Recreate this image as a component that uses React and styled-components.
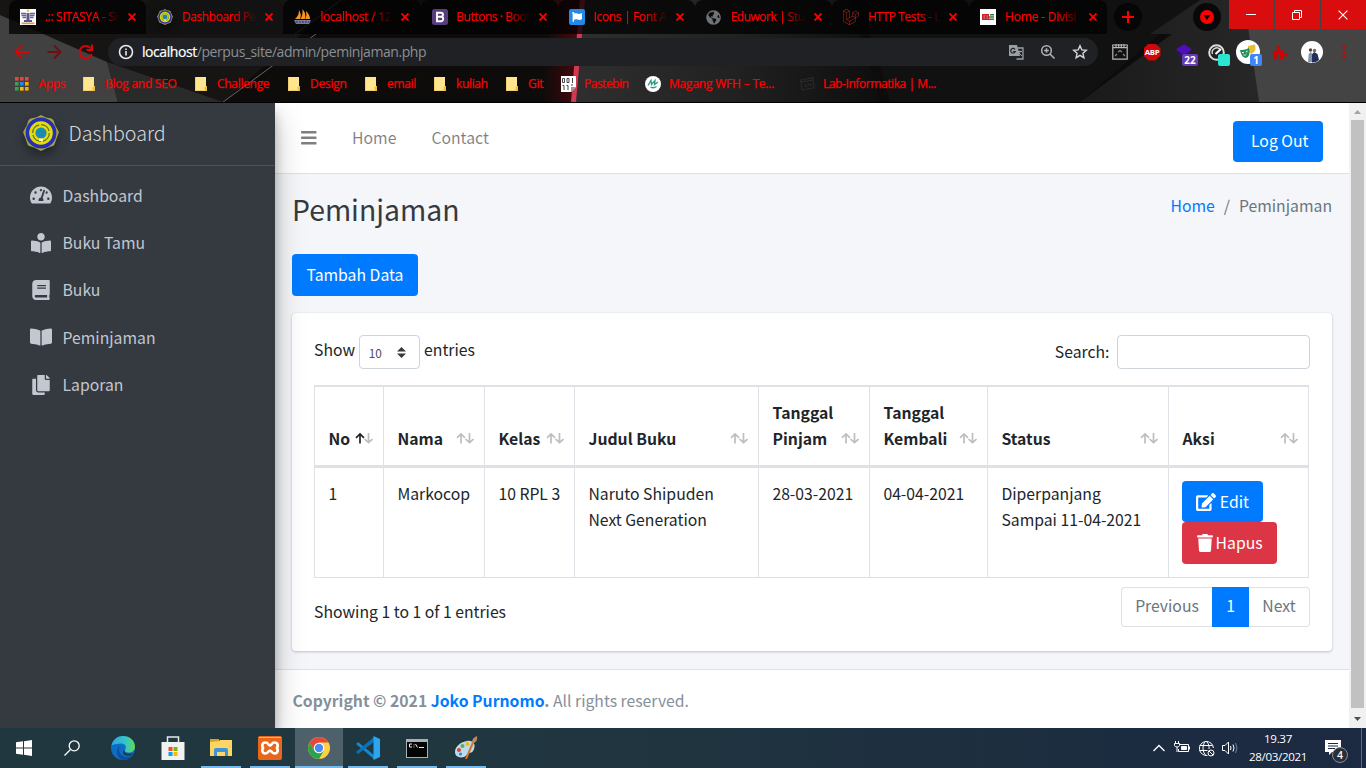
import React from "react";
import styled, { createGlobalStyle } from "styled-components";
import {
  FaTachometerAlt, FaBookReader, FaBook, FaBookOpen, FaCopy, FaBars, FaEdit, FaTrash,
  FaFlag, FaLaravel, FaGlobeAmericas, FaPuzzlePiece,
} from "react-icons/fa";

const sans = `"Noto Sans CJK SC", "Noto Sans CJK JP", sans-serif`;
const ui = `"Open Sans", "Noto Sans", sans-serif`;

const Global = createGlobalStyle`
  * { box-sizing: border-box; }
  body { margin: 0; overflow: hidden; background: #000; }
  svg { display: block; flex: none; }
`;

const Screen = styled.div`
  width: 1366px;
  height: 768px;
  display: flex;
  flex-direction: column;
  overflow: hidden;
  font-family: ${sans};
`;

/* ---------- browser frame ---------- */

const Browser = styled.header`
  position: relative;
  height: 103px;
  background: #0c0b0b;
  border-bottom: 1px solid #000;
  font-family: ${ui};
  color: #f00;
`;
const ThemeArt = styled.svg`
  position: absolute;
  inset: 0;
`;
const BrowserRows = styled.div`
  position: relative;
  display: flex;
  flex-direction: column;
`;
const TabStrip = styled.div`
  display: flex;
  height: 34px;
  padding-left: 9px;
`;
const Tab = styled.div`
  width: 137.2px;
  height: 34px;
  flex: none;
  display: flex;
  align-items: center;
  padding: 0 10px 0 11px;
  border-radius: 8px 8px 0 0;
  background: ${(p) => (p.$active ? "rgba(18,17,17,.75)" : "rgba(2,2,2,.78)")};
`;
const TabLine = styled.span`
  width: 1px;
  height: 20px;
  margin: 0 -10px 0 12px;
  background: #b00808;
`;
const TabTitle = styled.span`
  width: 75px;
  margin: 0 9px 0 9px;
  white-space: nowrap;
  font-size: 12px;
  line-height: 18px;
  letter-spacing: ${(p) => p.$ls}px;
  -webkit-text-stroke: 0.25px;
  mask-image: linear-gradient(to right, #000 70%, rgba(0, 0, 0, .1) 98%);
`;
const RoundButton = styled.div`
  width: 28px;
  height: 28px;
  margin: 3px 0 0 ${(p) => p.$left}px;
  border-radius: 50%;
  background: rgba(5, 5, 5, .9);
  display: flex;
  align-items: center;
  justify-content: center;
`;
const WindowButtons = styled.div`
  display: flex;
  gap: 1px;
  height: 29px;
  margin-left: auto;
`;
const WindowButton = styled.div`
  width: 45px;
  background: #d90c0e;
  display: flex;
  align-items: center;
  justify-content: center;
  padding-right: 1px;
`;

const Toolbar = styled.div`
  display: flex;
  align-items: center;
  height: 36px;
  padding-left: 13px;
`;
const NavIcons = styled.div`
  display: flex;
  gap: 14px;
  width: 95px;
`;
const AddressBar = styled.div`
  width: 990px;
  height: 28px;
  border-radius: 14px;
  background: #202124;
  display: flex;
  align-items: center;
  padding: 0 10px;
  font-size: 14px;
  color: #9aa0a6;
`;
const Url = styled.span`
  flex: 1;
  margin-left: 8px;
  letter-spacing: -0.43px;
  line-height: 20px;
  color: #8b8f94;
  b { color: #fff; font-weight: 400; -webkit-text-stroke: 0.2px; }
`;
const AddressIcons = styled.div`
  display: flex;
  gap: 16px;
`;
const Extensions = styled.div`
  display: flex;
  align-items: center;
  margin-left: 7px;
`;
const Ext = styled.div`
  position: relative;
  width: 32px;
  height: 28px;
  display: flex;
  align-items: center;
  justify-content: center;
  left: -1px;
`;
const ExtBadge = styled.span`
  position: absolute;
  left: ${(p) => p.$x}px;
  top: 16px;
  width: ${(p) => p.$w}px;
  height: 12px;
  border-radius: 2px;
  background: ${(p) => p.$color};
  color: #fff;
  font: 700 10px/12px ${ui};
  text-align: center;
`;
const Abp = styled.div`
  width: 17px;
  height: 17px;
  clip-path: polygon(30% 0, 70% 0, 100% 30%, 100% 70%, 70% 100%, 30% 100%, 0 70%, 0 30%);
  background: #d0080c;
  color: #fff;
  font: 700 7.8px/17px ${ui};
  letter-spacing: -0.3px;
  text-align: center;
`;

const Bookmarks = styled.div`
  display: flex;
  height: 28px;
  padding-left: 15px;
`;
const Bookmark = styled.div`
  width: ${(p) => p.$w}px;
  flex: none;
  display: flex;
  align-items: center;
  gap: ${(p) => p.$gap}px;
  font-size: 12px;
  line-height: 18px;
  letter-spacing: ${(p) => p.$ls}px;
  -webkit-text-stroke: 0.25px;
  white-space: nowrap;
`;

/* ---------- page ---------- */

const Page = styled.div`
  height: 625px;
  display: flex;
  background: #f4f6f9;
`;
const Sidebar = styled.aside`
  position: relative;
  z-index: 1;
  width: 275px;
  flex: none;
  background: #343a40;
  box-shadow: 0 14px 28px rgba(0, 0, 0, .25), 0 10px 10px rgba(0, 0, 0, .22);
  clip-path: inset(0 -40px 0 0);
`;
const Brand = styled.div`
  height: 63px;
  display: flex;
  align-items: center;
  gap: 9.5px;
  padding: 0 0 3px 23px;
  border-bottom: 1px solid #4b545c;
  font-size: 19.7px;
  font-weight: 300;
  line-height: 30px;
  color: rgba(255, 255, 255, .82);
`;
const Crest = styled.svg`
  border-radius: 50%;
  filter: drop-shadow(0 5px 5px rgba(0, 0, 0, .35));
`;
const Menu = styled.nav`
  padding-top: 6px;
`;
const MenuItem = styled.div`
  height: 47.4px;
  display: flex;
  align-items: center;
  padding-left: 28px;
  font-size: 15.75px;
  line-height: 26px;
  color: #c2c7d0;
`;
const MenuIcon = styled.span`
  width: 26px;
  margin-right: 8.5px;
  padding-bottom: 1px;
  display: flex;
  justify-content: center;
`;

const Main = styled.main`
  width: 1074px;
  flex: none;
  display: flex;
  flex-direction: column;
  font-size: 15.75px;
  line-height: 26.4px;
  color: #212529;
`;
const TopNav = styled.div`
  height: 71px;
  flex: none;
  display: flex;
  align-items: center;
  padding: 0 26px 0 25px;
  background: #fff;
  border-bottom: 1px solid #dee2e6;
  color: rgba(0, 0, 0, .5);
`;
const Burger = styled(FaBars)`
  margin-bottom: 1px;
`;
const NavLink = styled.span`
  margin-left: ${(p) => p.$left}px;
  padding-top: 1px;
`;
const Button = styled.button`
  display: inline-flex;
  align-items: center;
  height: ${(p) => p.$h || 41.5}px;
  width: ${(p) => p.$w}px;
  padding: 0 0 0 ${(p) => p.$pl || 14}px;
  gap: ${(p) => p.$gap || 3}px;
  border: 0;
  border-radius: 4px;
  background: ${(p) => (p.$danger ? "#dc3545" : "#007bff")};
  color: #fff;
  font: 400 15.75px/26px ${sans};
  white-space: nowrap;
`;
const LogOut = styled(Button)`
  margin: 7px 0 0 auto;
  padding-bottom: 1px;
`;
const ContentHeader = styled.div`
  display: flex;
  justify-content: space-between;
  height: 80px;
  flex: none;
  padding: 16px 17px 0 17px;
`;
const Title = styled.h1`
  margin: 0;
  font-size: 28.35px;
  font-weight: 400;
  line-height: 38px;
  color: #343a40;
`;
const Breadcrumb = styled.div`
  display: flex;
  gap: 9px;
  padding-top: 3px;
  color: #6c757d;
  a { color: #007bff; }
`;
const Actions = styled.div`
  padding: 0 17px;
  height: 59px;
  flex: none;
  display: flex;
  align-items: flex-start;
`;
const Card = styled.section`
  height: 338px;
  flex: none;
  margin: 0 17px 0 17px;
  padding: 22px;
  border-radius: 4px;
  background: #fff;
  box-shadow: 0 0 1px rgba(0, 0, 0, .13), 0 1px 3px rgba(0, 0, 0, .2);
`;
const TableTools = styled.div`
  display: flex;
  justify-content: space-between;
  height: 50px;
`;
const LengthPicker = styled.label`
  display: flex;
  gap: 4px;
  line-height: 30px;
`;
const Select = styled.div`
  width: 61px;
  height: 34px;
  border: 1px solid #ced4da;
  border-radius: 4px;
  display: flex;
  align-items: center;
  justify-content: space-between;
  padding: 1px 13px 0 8.6px;
  font-size: 11.8px;
  line-height: 16px;
  color: #495057;
`;
const SearchBox = styled.label`
  display: flex;
  gap: 7.5px;
  line-height: 34px;
`;
const SearchInput = styled.input`
  width: 193px;
  height: 34px;
  margin: 0;
  border: 1px solid #ced4da;
  border-radius: 4px;
  background: #fff;
`;
const Table = styled.table`
  width: 995px;
  table-layout: fixed;
  border-spacing: 0;
  border-right: 1px solid #dee2e6;
`;
const Th = styled.th`
  height: 83px;
  padding: 0 10px 13px 13.5px;
  vertical-align: bottom;
  text-align: left;
  font-weight: 700;
  line-height: 26px;
  border: solid #dee2e6;
  border-width: 2px 0 3px 1px;
`;
const ThInner = styled.div`
  display: flex;
  align-items: flex-end;
  justify-content: space-between;
`;
const Td = styled.td`
  height: 110px;
  padding: 13px 0 0 13.4px;
  vertical-align: top;
  white-space: nowrap;
  border: solid #dee2e6;
  border-width: 0 0 1px 1px;
`;
const ButtonStack = styled.div`
  display: flex;
  flex-direction: column;
  align-items: flex-start;
`;
const TableFooter = styled.div`
  display: flex;
  justify-content: space-between;
  padding-top: 9px;
`;
const Info = styled.div`
  padding-top: 12px;
`;
const Pagination = styled.div`
  display: flex;
  height: 40px;
`;
const PageLink = styled.div`
  width: ${(p) => p.$w}px;
  border: 1px solid ${(p) => (p.$active ? "#007bff" : "#dee2e6")};
  border-left-width: ${(p) => (p.$last ? 0 : 1)}px;
  border-right-width: ${(p) => (p.$first ? 0 : 1)}px;
  border-radius: ${(p) => (p.$first ? "4px 0 0 4px" : p.$last ? "0 4px 4px 0" : "0")};
  background: ${(p) => (p.$active ? "#007bff" : "#fff")};
  color: ${(p) => (p.$active ? "#fff" : "#6c757d")};
  line-height: 36px;
  text-align: center;
`;
const Footer = styled.footer`
  flex: 1;
  margin-top: 18px;
  padding: 18px 0 0 17.5px;
  background: #fff;
  border-top: 1px solid #dee2e6;
  color: #869099;
  a { color: #007bff; }
`;
const Scrollbar = styled.div`
  width: 17px;
  display: flex;
  flex-direction: column;
  align-items: center;
  padding-top: 7px;
  background: #f1f1f1;
`;
const Thumb = styled.div`
  width: 13px;
  height: 588px;
  margin: 6px 0 9px;
  background: #c1c1c1;
`;

/* ---------- taskbar ---------- */

const Taskbar = styled.div`
  height: 40px;
  display: flex;
  background: linear-gradient(to right, #213740 0%, #213740 35%, #1e303f 65%, #1b2942 100%);
  color: #fff;
  font-family: ${ui};
`;
const Task = styled.div`
  width: ${(p) => p.$w || 49}px;
  flex: none;
  display: flex;
  align-items: center;
  justify-content: center;
  background:
    linear-gradient(#76b9ed, #76b9ed) center bottom / ${(p) => (p.$active ? 48 : p.$open ? 40 : 0)}px 2px no-repeat,
    linear-gradient(${(p) => (p.$active ? "#4e616a, #4e616a" : "transparent, transparent")}) center / 48px 40px no-repeat;
`;
const Tray = styled.div`
  display: flex;
  align-items: center;
  margin-left: auto;
`;
const TrayIcons = styled.div`
  display: flex;
  align-items: center;
  gap: 7px;
  svg:first-child { margin-right: 2px; }
`;
const Clock = styled.div`
  width: 64px;
  margin: 0 14px 0 7px;
  font-size: 11.6px;
  line-height: 18px;
  letter-spacing: -0.35px;
  text-align: center;
`;
const Notice = styled.div`
  position: relative;
  width: 38px;
  height: 40px;
  padding: 12px 0 0 1px;
  border-right: 1px solid #5b6878;
  margin-right: 4px;
`;
const NoticeCount = styled.span`
  position: absolute;
  left: 8px;
  top: 19px;
  width: 16px;
  height: 16px;
  border: 1px solid #87909c;
  border-radius: 50%;
  background: #2c2f35;
  font-size: 10.5px;
  font-weight: 600;
  line-height: 14px;
  text-align: center;
`;

/* ---------- icons ---------- */

const Cross = ({ size = 8, color = "#f00", w = 1.9 }) => (
  <svg width={size} height={size} viewBox="0 0 8 8" stroke={color} strokeWidth={w}><path d="M.5 .5l7 7M7.5 .5l-7 7" /></svg>
);
const Folder = () => (
  <svg width="12" height="14" viewBox="0 0 12 14"><path d="M0 0h11v9h1v5H0z" fill="#ffe590" /><path d="M.5 0v13.500H9" fill="none" stroke="#eec95f" strokeWidth=".8" /><path d="M9.500 14V10.500L11 9h1v5z" fill="#eebf3c" /></svg>
);
const CrestMark = ({ size }) => (
  <Crest width={size} height={size} viewBox="0 0 36 36">
    <path d="M18 0l5 2.6 7 1.2 2.3 6.6L36 17l-2.4 6.5-2.5 7L24 33l-6 3-6-3-7-2.500-2.500-7L0 17l3.700-6.600L6 3.800l7-1.200z" fill="#a6a340" />
    <circle cx="18" cy="18" r="15.4" fill="#2630b4" />
    <circle cx="18" cy="18" r="11.8" fill="#e5dc0c" />
    <circle cx="18" cy="18" r="8.3" fill="none" stroke="#5c7429" strokeWidth="1.3" strokeDasharray="11 2" />
    <circle cx="18" cy="18" r="5.6" fill="#188fb4" />
    <path d="M14 17.500q4-2 8 0M15 20h6" fill="none" stroke="#4267a0" strokeWidth=".7" />
    <path d="M16 23.500h4v2.500h-4z" fill="#fff6a0" />
  </Crest>
);
const favicons = {
  sitasya: (
    <svg width="16" height="16" viewBox="0 0 16 16"><path d="M0 0h16v16H0z" fill="#fff" /><path d="M1 4.500h5M1.500 6.500H6M2.500 8.500H6M10 4.500h5M10 6.500h4.500M10 8.500h3.500" stroke="#67629b" strokeWidth="1.400" /><path d="M6.500 4h3v7h-3zM4 11h8v2H4z" fill="#5c568e" /><circle cx="8" cy="1.800" r="1.300" fill="#f0bd36" /><path d="M1.500 13.500h13v1.700h-13z" fill="#d69a54" /></svg>
  ),
  crest: <CrestMark size={16} />,
  pma: (
    <svg width="17" height="16" viewBox="0 0 17 16"><path d="M1 10Q5 7 5 1q3 5 1 9zM6.500 10Q9 6 8.500 0q4 5 2.500 10zM11.500 10Q13 6 12 2q4 4 4 8z" fill="#f7981d" /><path d="M0 11h17l-2 4H2z" fill="#777b9f" /><path d="M2 13h13" stroke="#292e55" strokeDasharray="2 1" /></svg>
  ),
  boot: (
    <svg width="16" height="16" viewBox="0 0 16 16"><rect width="16" height="16" rx="2.500" fill="#563d7c" /><path d="M5 3.800h4a2 2 0 010 4 2.200 2.200 0 010 4.400H5zM5 7.800h4" fill="none" stroke="#fff" strokeWidth="1.900" /></svg>
  ),
};
const Square = styled.span`
  width: 16px;
  height: 16px;
  flex: none;
  border-radius: ${(p) => p.$r || 0}px;
  background: ${(p) => p.$bg};
  color: ${(p) => p.$color};
  display: flex;
  align-items: center;
  justify-content: center;
`;

const tabs = [
  { title: ".:: SITASYA - Si", ls: -0.3, icon: favicons.sitasya },
  { title: "Dashboard Pe", ls: -0.42, icon: favicons.crest, active: true },
  { title: "localhost / 12", ls: -0.25, icon: favicons.pma, line: true },
  { title: "Buttons · Boot", ls: -0.45, icon: favicons.boot, line: true },
  { title: "Icons | Font A", ls: -0.35, icon: <Square $bg="#228ae6" $r={2} $color="#fff"><FaFlag size={10} /></Square>, line: true },
  { title: "Eduwork | Stu", ls: -0.5, icon: <Square $bg="transparent" $color="#6f7378"><FaGlobeAmericas size={15} /></Square>, line: true },
  { title: "HTTP Tests - L", ls: -0.4, icon: <Square $bg="transparent" $color="#b5251e"><FaLaravel size={16} /></Square>, line: true },
  { title: "Home - Divisi", ls: -0.2, icon: <Square $bg="#fff" $color="#c4262a"><svg width="12" height="6" viewBox="0 0 12 6"><path d="M0 0h7v6H0z" fill="#c4262a" /><path d="M1.500 2h1.500M1.500 4h1.500M4.500 2h1.500M4.500 4h1.500" stroke="#fff" strokeWidth=".5" /><path d="M12 .7H8M12 3H7M12 5.300H7" stroke="#39764e" strokeWidth="1.400" /></svg></Square> },
];

const AppsGrid = () => (
  <svg width="14" height="14" viewBox="0 0 14 14">
    {["#e8453c", "#e8453c", "#e8453c", "#34a353", "#1f87fc", "#f9ab00", "#34a353", "#f9bb06", "#f9ab00"].map((c, i) => (
      <rect key={i} x={(i % 3) * 5} y={Math.floor(i / 3) * 5} width="3.600" height="3.600" fill={c} />
    ))}
  </svg>
);
const Binary = () => (
  <svg width="15" height="16" viewBox="0 0 15 16"><path d="M0 0h15v11l-5 5H0z" fill="#fff" /><path d="M1.500 2.500h2v4h-2zM6 2.500h2v4H6zM11.500 2v5M1.500 9.500h1.500V14M5.500 9.500H7V14M10 9h2" fill="none" stroke="#333" strokeWidth=".9" /><path d="M10 16v-5h5z" fill="#8f98a0" /></svg>
);
const Magang = () => (
  <svg width="16" height="16" viewBox="0 0 16 16"><circle cx="8" cy="8" r="8" fill="#fff" /><path d="M3 9.500L6 4.500l.5 4L10 4.500 9.500 8.500 13 6M5.500 11q3 1.700 6-.5" fill="none" stroke="#2c9a7f" strokeWidth="1.300" /></svg>
);
const CodeWindow = () => (
  <svg width="15" height="14" viewBox="0 0 15 14" fill="none" stroke="#2a2828" strokeWidth="1.200"><path d="M.7 3L13 .8l1.200 10L2 13zM1 5.200l12.500-2M6 7L4.500 8.700 6.500 10M9.500 6.200l2 1.300-1.500 1.700M8.500 6.500l-.8 3.300" /></svg>
);

const bookmarks = [
  { w: 68, gap: 9.5, ls: -0.3, icon: <AppsGrid />, label: "Apps" },
  { w: 112, gap: 10, ls: -0.25, icon: <Folder />, label: "Blog and SEO" },
  { w: 93, gap: 10, ls: -0.3, icon: <Folder />, label: "Challenge" },
  { w: 77, gap: 10, ls: -0.25, icon: <Folder />, label: "Design" },
  { w: 69, gap: 10, ls: -0.35, icon: <Folder />, label: "email" },
  { w: 72, gap: 10, ls: -0.35, icon: <Folder />, label: "kuliah" },
  { w: 55, gap: 10, ls: -0.3, icon: <Folder />, label: "Git" },
  { w: 84, gap: 8, ls: -0.5, icon: <Binary />, label: "Pastebin" },
  { w: 155, gap: 8, ls: -0.2, icon: <Magang />, label: "Magang WFH – Te..." },
  { w: 140, gap: 8, ls: -0.42, icon: <CodeWindow />, label: "Lab-Informatika | M..." },
];

const SortArrows = ({ asc }) => (
  <svg width="18" height="26" viewBox="0 0 18 26" fill="none" strokeWidth="1.700">
    <path d="M13.500 7v10M9.500 13l4 3.700 4-3.700" stroke="#bdbebf" />
    <path d="M5 17.500V8M1 11.800L5 8 9 11.800" stroke={asc ? "#212529" : "#bdbebf"} />
  </svg>
);
const columns = [
  ["No", 69], ["Nama", 101], ["Kelas", 90], ["Judul Buku", 184],
  ["Tanggal Pinjam", 111], ["Tanggal Kembali", 118], ["Status", 181], ["Aksi", 140],
];
const menu = [
  ["Dashboard", FaTachometerAlt, 22], ["Buku Tamu", FaBookReader, 20], ["Buku", FaBook, 20],
  ["Peminjaman", FaBookOpen, 22], ["Laporan", FaCopy, 20],
];

const Theme = () => (
  <ThemeArt width="1366" height="102" viewBox="0 0 1366 102">
    <defs>
      <linearGradient id="mid" x1="0" x2="1"><stop offset="0" stopColor="#302f2f" /><stop offset=".5" stopColor="#222" /><stop offset="1" stopColor="#0e0e0e" /></linearGradient>
      <linearGradient id="glow" x1="0" x2="1"><stop offset="0" stopColor="#700008" stopOpacity="0" /><stop offset="1" stopColor="#8a0510" stopOpacity=".6" /></linearGradient>
      <linearGradient id="right" x1="0" x2="1"><stop offset="0" stopColor="#1a1a1a" /><stop offset="1" stopColor="#272727" /></linearGradient>
    </defs>
    <rect width="1366" height="102" fill="#0d0c0b" />
    <path d="M0 0H341L223 102H0z" fill="#161514" />
    <path d="M0 15L107 62 118 102H0z" fill="#414141" />
    <path d="M107 62L223 102H118z" fill="#2a2a2a" />
    <path d="M341 0L295 34M316 34L223 102" stroke="#707070" strokeWidth=".9" />
    <path d="M583 0H850L880 102H573z" fill="url(#mid)" />
    <path d="M553 0H583L573 102H543z" fill="url(#glow)" />
    <path d="M580 0h5L576 102h-5z" fill="#d03a50" />
    <path d="M860 0H1200L1080 102H890z" fill="#121111" />
    <path d="M1200 0H1245L1259 102H1080L1172 34H1150z" fill="url(#right)" />
    <path d="M1244 0H1366V102H1259z" fill="#444" />
  </ThemeArt>
);

export default function App() {
  return (
    <Screen>
      <Global />
      <Browser>
        <Theme />
        <BrowserRows>
          <TabStrip>
            {tabs.map((t) => (
              <Tab key={t.title} $active={t.active}>
                {t.icon}
                <TabTitle $ls={t.ls}>{t.title}</TabTitle>
                <Cross />
                {t.line && <TabLine />}
              </Tab>
            ))}
            <RoundButton $left={7.5}><svg width="12" height="12" viewBox="0 0 12 12" stroke="#f00" strokeWidth="2"><path d="M6 0v12M0 6h12" /></svg></RoundButton>
            <RoundButton $left={50.5}><svg width="14" height="14" viewBox="0 0 14 14"><circle cx="7" cy="7" r="7" fill="#f00" /><path d="M3.500 5h7L7 10z" fill="#160404" /></svg></RoundButton>
            <WindowButtons>
              <WindowButton><svg width="10" height="2" viewBox="0 0 10 2"><path d="M0 .5h10" stroke="#fff" /></svg></WindowButton>
              <WindowButton><svg width="10" height="10" viewBox="0 0 10 10" fill="none" stroke="#fff"><path d="M.5 2.500h7v7h-7zM2.500 2.500v-2h7v7h-2" /></svg></WindowButton>
              <WindowButton><Cross size={10} color="#fff" w={0.9} /></WindowButton>
            </WindowButtons>
          </TabStrip>
          <Toolbar>
            <NavIcons>
              <svg width="18" height="16" viewBox="0 0 18 16" fill="none" stroke="#d80505" strokeWidth="2"><path d="M16.500 8H3M9 1.500L2.500 8 9 14.500" /></svg>
              <svg width="18" height="16" viewBox="0 0 18 16" fill="none" stroke="#6c1010" strokeWidth="2"><path d="M2.500 8H15M9 1.500L15.500 8 9 14.500" /></svg>
              <svg width="18" height="16" viewBox="0 0 18 16" fill="none" stroke="#d80505" strokeWidth="2"><path d="M13.800 4.500A6.200 6.200 0 1014.700 10M15 .5V6H9.500" /></svg>
            </NavIcons>
            <AddressBar>
              <svg width="16" height="16" viewBox="0 0 16 16" fill="none" stroke="#e8eaed" strokeWidth="1.600"><circle cx="8" cy="8" r="6.500" /><path d="M8 7v4.500M8 4.400V6" /></svg>
              <Url><b>localhost</b>/perpus_site/admin/peminjaman.php</Url>
              <AddressIcons>
                <svg width="16" height="16" viewBox="0 0 16 16"><path d="M1 1h8l3 11H1z" fill="#9a9fa5" /><path d="M7 4h8v11H8.500" fill="none" stroke="#9a9fa5" strokeWidth="1.300" /><path d="M7 5.500A2.300 2.300 0 107.200 7.500H5.300" fill="none" stroke="#202124" strokeWidth="1.200" /><path d="M10 7.500h4M12 6.500v1.200q0 2-2 3.300M11 9l3 3" stroke="#9a9fa5" fill="none" /></svg>
                <svg width="16" height="16" viewBox="0 0 16 16" fill="none" stroke="#b0b3b8" strokeWidth="1.500"><circle cx="6.500" cy="6.500" r="4.800" /><path d="M10 10l4.500 4.500M6.500 4.200v4.600M4.200 6.500h4.600" /></svg>
                <svg width="16" height="16" viewBox="0 0 16 16" fill="none" stroke="#d5d7da" strokeWidth="1.400"><path d="M8 1.800l1.800 4.100 4.500.4-3.400 3 1 4.400L8 11.400l-3.900 2.300 1-4.400-3.400-3 4.500-.4z" /></svg>
              </AddressIcons>
            </AddressBar>
            <Extensions>
              <Ext>
                <svg width="16" height="16" viewBox="0 0 16 16" fill="none" stroke="#b8b8b8" strokeWidth="1.200"><path d="M.8 1h14.400v14.200H.8zM1 3.700h14M4 0v3M6.700 0v3M9.300 0v3M12 0v3" /><path d="M3 12l2-2M6 8l2-1.500L10 8M11 10l2 2" stroke="#858585" /></svg>
              </Ext>
              <Ext><Abp>ABP</Abp></Ext>
              <Ext>
                <svg width="16" height="18" viewBox="0 0 16 18"><path d="M8 1l8 5.500-8 6-8-6z" fill="#4d0fb8" /><path d="M1 9.500l7 4 6-4v2l-6 4-7-4z" fill="#32107a" /></svg>
                <ExtBadge $x={14} $w={16} $color="#673ab7">22</ExtBadge>
              </Ext>
              <Ext>
                <svg width="17" height="17" viewBox="0 0 17 17"><circle cx="8.500" cy="8.500" r="7.300" fill="#202020" stroke="#ddd" strokeWidth="2" /><path d="M4.500 10a4.500 4.500 0 018-4" fill="none" stroke="#ddd" strokeWidth="1.300" /><path d="M7.500 10L13 5" stroke="#fff" strokeWidth="2" /></svg>
                <ExtBadge $x={18} $w={12} $color="#2be5d3" />
              </Ext>
              <Ext>
                <svg width="24" height="24" viewBox="0 0 24 24"><circle cx="12" cy="12" r="12" fill="#fff" /><path d="M12 6l7-1.500q2 7-3.500 9.500-4-2-3.500-8z" fill="#e5bd37" /><path d="M4 10q5 .5 9-2 2 8-3 10-5-1-6-8z" fill="#23915a" /><path d="M6 12.500l2 .3M10 12l1.600-1M7.500 15q2 .7 3-1" stroke="#fff" /></svg>
                <ExtBadge $x={18} $w={12} $color="#4285f4">1</ExtBadge>
              </Ext>
              <Ext><FaPuzzlePiece size={15} color="#cc0404" /></Ext>
              <Ext>
                <svg width="22" height="22" viewBox="0 0 22 22"><circle cx="11" cy="11" r="11" fill="#fff" /><circle cx="9.500" cy="9" r="1.700" fill="#55443e" /><circle cx="13.500" cy="9.500" r="1.700" fill="#826458" /><path d="M7 21l.7-8 2-2 2 2v8z" fill="#8395a9" /><path d="M11 21.500v-8l2-2.500 3.500 2 1.500 6-3 2z" fill="#222f5c" /></svg>
              </Ext>
              <Ext>
                <svg width="4" height="14" viewBox="0 0 4 14" fill="#c90505"><circle cx="2" cy="2" r="1.600" /><circle cx="2" cy="7" r="1.600" /><circle cx="2" cy="12" r="1.600" /></svg>
              </Ext>
            </Extensions>
          </Toolbar>
          <Bookmarks>
            {bookmarks.map((b) => (
              <Bookmark key={b.label} $w={b.w} $gap={b.gap} $ls={b.ls}>{b.icon}{b.label}</Bookmark>
            ))}
          </Bookmarks>
        </BrowserRows>
      </Browser>

      <Page>
        <Sidebar>
          <Brand><CrestMark size={36} />Dashboard</Brand>
          <Menu>
            {menu.map(([label, Icon, size]) => (
              <MenuItem key={label}><MenuIcon><Icon size={size} /></MenuIcon>{label}</MenuItem>
            ))}
          </Menu>
        </Sidebar>
        <Main>
          <TopNav>
            <Burger size={17.6} />
            <NavLink $left={34.5}>Home</NavLink>
            <NavLink $left={35}>Contact</NavLink>
            <LogOut $w={90} $h={41} $pl={18}>Log Out</LogOut>
          </TopNav>
          <ContentHeader>
            <Title>Peminjaman</Title>
            <Breadcrumb><a>Home</a><span>/</span><span>Peminjaman</span></Breadcrumb>
          </ContentHeader>
          <Actions><Button $w={126} $pl={14.5}>Tambah Data</Button></Actions>
          <Card>
            <TableTools>
              <LengthPicker>
                Show
                <Select>10<svg width="9" height="11" viewBox="0 0 9 11" fill="#343a40"><path d="M0 4.600L4.500 0 9 4.600zM0 6.400h9L4.500 11z" /></svg></Select>
                entries
              </LengthPicker>
              <SearchBox>Search:<SearchInput /></SearchBox>
            </TableTools>
            <Table>
              <colgroup>{columns.map(([name, w]) => <col key={name} width={w} />)}</colgroup>
              <thead>
                <tr>
                  {columns.map(([name], i) => (
                    <Th key={name}><ThInner><span>{name}</span><SortArrows asc={i === 0} /></ThInner></Th>
                  ))}
                </tr>
              </thead>
              <tbody>
                <tr>
                  <Td>1</Td>
                  <Td>Markocop</Td>
                  <Td>10 RPL 3</Td>
                  <Td>Naruto Shipuden<br />Next Generation</Td>
                  <Td>28-03-2021</Td>
                  <Td>04-04-2021</Td>
                  <Td>Diperpanjang<br />Sampai 11-04-2021</Td>
                  <Td>
                    <ButtonStack>
                      <Button $w={81} $h={41} $gap={3.4}><FaEdit size={20} />Edit</Button>
                      <Button $w={95} $h={42} $gap={1.2} $danger><FaTrash size={18} />Hapus</Button>
                    </ButtonStack>
                  </Td>
                </tr>
              </tbody>
            </Table>
            <TableFooter>
              <Info>Showing 1 to 1 of 1 entries</Info>
              <Pagination>
                <PageLink $w={91} $first>Previous</PageLink>
                <PageLink $w={37} $active>1</PageLink>
                <PageLink $w={61} $last>Next</PageLink>
              </Pagination>
            </TableFooter>
          </Card>
          <Footer><b>Copyright © 2021 <a>Joko Purnomo</a>.</b> All rights reserved.</Footer>
        </Main>
        <Scrollbar>
          <svg width="7" height="4" viewBox="0 0 7 4"><path d="M0 4L3.500 0 7 4z" fill="#a3a3a3" /></svg>
          <Thumb />
          <svg width="7" height="4" viewBox="0 0 7 4"><path d="M0 0L3.500 4 7 0z" fill="#505050" /></svg>
        </Scrollbar>
      </Page>

      <Taskbar>
        <Task $w={48}><svg width="16" height="16" viewBox="0 0 16 16" fill="#fff"><path d="M0 2.300L7 1.300v6.200H0zM8 1.200L16 0v7.500H8zM0 8.500h7v6.200l-7-1zM8 8.500h8V16l-8-1.200z" /></svg></Task>
        <Task $w={48}><svg width="16" height="16" viewBox="0 0 16 16" fill="none" stroke="#fff" strokeWidth="1.300"><circle cx="10.200" cy="5.800" r="5" /><path d="M6.500 9.500L0.500 15.500" /></svg></Task>
        <Task $w={53}>
          <svg width="24" height="24" viewBox="0 0 24 24">
            <defs><linearGradient id="eg" x1="0" x2="1"><stop offset="0" stopColor="#2aa7e0" /><stop offset=".6" stopColor="#36c5c8" /><stop offset="1" stopColor="#5fdc4e" /></linearGradient></defs>
            <circle cx="12" cy="12" r="12" fill="#0d6cc4" />
            <path d="M0.500 9.500C2 3 7 0 12 0c7 0 12 5 12 10.500 0 4-3 6-6 6-3.500 0-5-1.300-4-2.500 2-3 .5-6.500-4-6.500-4 0-8 1-9.500 2z" fill="url(#eg)" />
            <path d="M10 9c-4 3-2 11 5 12 3 .4 5-.5 7.500-3C20 22.500 16 24 12 24 5 22.500 4 12 10 9z" fill="#0b4f9f" />
            <path d="M14 14c-2 3 3 5 8.500 3-2 2.500-4 3-6.500 2.700-4-.6-5.500-4.700-2-5.700z" fill="#213740" />
          </svg>
        </Task>
        <Task $w={47}>
          <svg width="24" height="24" viewBox="0 0 24 24"><path d="M6.500 7V1h11v6" fill="none" stroke="#e8e8e8" strokeWidth="1.500" /><path d="M.5 6h23v18H.5z" fill="#f2f2f2" /><path d="M7.500 11h4v4h-4z" fill="#f25022" /><path d="M12.500 11h4v4h-4z" fill="#7fba00" /><path d="M7.500 16h4v4h-4z" fill="#00a4ef" /><path d="M12.500 16h4v4h-4z" fill="#ffb900" /></svg>
        </Task>
        <Task $w={50} $open>
          <svg width="22" height="20" viewBox="0 0 22 20"><path d="M0 1h9v4H0z" fill="#dfa015" /><path d="M0 4l9-1 1-1h12v16H0z" fill="#fcd567" /><path d="M4 18v-6q0-2 2-2h10q2 0 2 2v6h-3v-4H7v4z" fill="#3c93d6" /></svg>
        </Task>
        <Task $w={48} $open>
          <svg width="24" height="24" viewBox="0 0 24 24"><rect width="24" height="24" rx="2" fill="#e8671a" /><path d="M1 1.500h22" stroke="#f7b189" /><path d="M7.500 6.500c3 0 3 3 4.500 3s1.500-3 4.500-3c4 0 4 5 1.500 5.500 2.500.5 2.500 5.500-1.500 5.500-3 0-3-3-4.500-3s-1.500 3-4.500 3c-4 0-4-5-1.500-5.500-2.500-.5-2.500-5.500 1.500-5.500z" fill="none" stroke="#fff" strokeWidth="2.600" /></svg>
        </Task>
        <Task $w={50} $open $active>
          <svg width="22" height="22" viewBox="0 0 22 22"><circle cx="11" cy="11" r="11" fill="#ffd047" /><path d="M1.500 5.500A11 11 0 0120.500 5.500H11L6.200 13.700z" fill="#df4a3c" /><path d="M1.500 5.500A11 11 0 0011 22L15.800 13.700H6.200z" fill="#2ba24c" /><circle cx="11" cy="11" r="5.300" fill="#fff" /><circle cx="11" cy="11" r="4.200" fill="#4a8af4" /></svg>
        </Task>
        <Task $w={48} $open>
          <svg width="24" height="24" viewBox="0 0 24 24"><path d="M0 8l2-2 16 13v4z" fill="#1488d2" /><path d="M0 16l2 2L18 6V1z" fill="#0b72b8" /><path d="M17.500 0L24 3v18l-6.500 3z" fill="#2aa5ee" /></svg>
        </Task>
        <Task $w={50} $open>
          <svg width="22" height="19" viewBox="0 0 22 19"><path d="M0 0h22v19H0z" fill="#aab0b5" /><path d="M1 3h20v15H1z" fill="#050505" /><path d="M6 5H3.500v3H6M8 5.500v.8M8 7.500v.8M9.500 5l2 3.500M13 8.500h5" stroke="#eee" fill="none" /></svg>
        </Task>
        <Task $w={48} $open>
          <svg width="24" height="24" viewBox="0 0 24 24"><path d="M13 5c6-1 9 3 7 8-1 3-3 4-5 4s-2 3-5 4c-5 1.500-9-1-9-5C1 10 7 6 13 5z" fill="#bcdcec" /><circle cx="5" cy="14" r="2" fill="#d94435" /><circle cx="8.500" cy="10" r="2" fill="#58b150" /><circle cx="13.500" cy="8" r="2" fill="#f3b61f" /><circle cx="6.500" cy="18" r="1.600" fill="#3f7fc9" /><path d="M11 23l7-17 2 1-7 16z" fill="#d4762a" /><path d="M18 6q0-4 5-6 1 5-3 7z" fill="#b98c5b" /></svg>
        </Task>
        <Tray>
          <TrayIcons>
            <svg width="12" height="8" viewBox="0 0 12 8" fill="none" stroke="#fff" strokeWidth="1.300"><path d="M.5 7L6 1.500 11.500 7" /></svg>
            <svg width="17" height="14" viewBox="0 0 17 14" fill="none" stroke="#fff"><path d="M5.500 3.500h9v7H4.500V8M15.500 5.500v3M1.500 0v2.500M4.500 0v2.500M.5 2.500h5v2q-.5 1.500-2.500 1.500T.5 4.500zM3 6v5" /><path d="M7.500 5.500h5v3h-5z" fill="#fff" /></svg>
            <svg width="17" height="17" viewBox="0 0 17 17" fill="none" stroke="#fff"><path d="M9.500 15.400A7 7 0 1115.400 8M8 1C4 4 4 12 8 15.500M8 1c3 3 3.200 5 3 8M1.500 5.500h13M1.500 10.500h8" /><circle cx="13" cy="13" r="3" /><path d="M11 11l4 4" /></svg>
            <svg width="17" height="14" viewBox="0 0 17 14" fill="none" stroke="#fff"><path d="M.5 4.500h2.500l3.500-3.500v12L3 9.500H.5zM8.500 5q1 2 0 4M11 3.500q2 3.500 0 7" /><path d="M13.500 2q3 5 0 10" stroke="#74818f" /></svg>
          </TrayIcons>
          <Clock>19.37<br />28/03/2021</Clock>
          <Notice>
            <svg width="16" height="15" viewBox="0 0 16 15"><path d="M0 0h16v12H7l-3 3v-3H0z" fill="#fff" /><path d="M3 3.500h10M3 6h10M3 8.500h7" stroke="#1b2942" /></svg>
            <NoticeCount>4</NoticeCount>
          </Notice>
        </Tray>
      </Taskbar>
    </Screen>
  );
}
